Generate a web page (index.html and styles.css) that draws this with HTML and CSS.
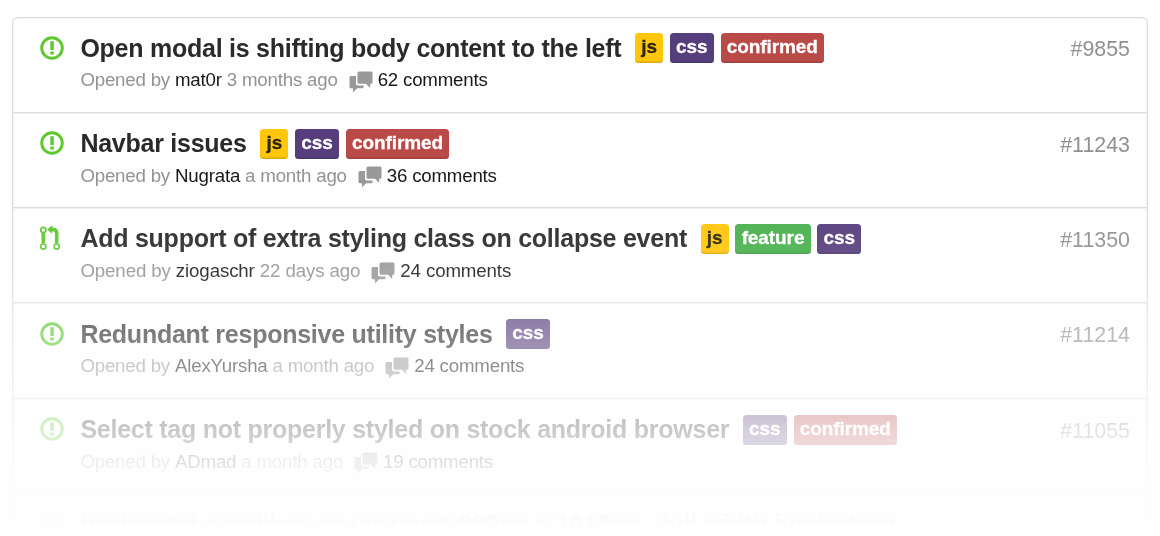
FILE: index.html
```html
<!DOCTYPE html>
<html lang="en">
<head>
<meta charset="utf-8">
<title>Issues</title>
<link rel="stylesheet" href="styles.css">
</head>
<body>
<svg class="symbols" aria-hidden="true">
  <symbol id="opened" viewBox="0 0 24 24"><circle cx="12" cy="12" r="10.3" fill="none" stroke="currentColor" stroke-width="2.9"/><path fill="currentColor" d="M10.300 5.300h3.500v8.700h-3.500zM10.300 15.600h3.500v3h-3.500z"/></symbol>
  <symbol id="pull" viewBox="0 0 24 26"><g fill="none" stroke="currentColor"><path stroke-width="3.600" d="M4.300 7.500v11M17.700 18.500V8.400q0-4-4.200-4H12"/><circle cx="4.300" cy="4.900" r="2.600" stroke-width="1.700"/><circle cx="4.300" cy="21.600" r="2.600" stroke-width="1.700"/><circle cx="17.700" cy="21.600" r="2.600" stroke-width="1.700"/></g><path fill="currentColor" d="M8.100 4.500L13.300.2v8.600z"/></symbol>
  <symbol id="comments" viewBox="0 0 24 22"><path fill="currentColor" d="M10 .5h12q1.500 0 1.500 1.500v9.200q0 1.500-1.500 1.500h-.8v4.300l-4.200-4.300H10q-1.500 0-1.500-1.500V2Q8.500.5 10 .5z"/><path fill="currentColor" d="M2 5h5v7.700q0 1.800 1.800 1.800h5.800v1.300q0 1.500-1.500 1.500H8.200l-4.300 4.200v-4.200H2q-1.500 0-1.500-1.500V6.500Q.5 5 2 5z"/></symbol>
</svg>
<main class="viewport">
<ul class="issues">
  <li class="issue">
    <svg class="state"><use href="#opened"/></svg>
    <div class="body">
      <div class="heading"><h2 class="title">Open modal is shifting body content to the left</h2><span class="label js">js</span><span class="label css">css</span><span class="label confirmed">confirmed</span></div>
      <p class="meta">Opened by <b class="user">mat0r</b> 3 months ago<svg class="bubble"><use href="#comments"/></svg><span class="user">62 comments</span></p>
    </div>
    <span class="number">#9855</span>
  </li>
  <li class="issue">
    <svg class="state"><use href="#opened"/></svg>
    <div class="body">
      <div class="heading"><h2 class="title">Navbar issues</h2><span class="label js">js</span><span class="label css">css</span><span class="label confirmed">confirmed</span></div>
      <p class="meta">Opened by <b class="user">Nugrata</b> a month ago<svg class="bubble"><use href="#comments"/></svg><span class="user">36 comments</span></p>
    </div>
    <span class="number">#11243</span>
  </li>
  <li class="issue">
    <svg class="state pull"><use href="#pull"/></svg>
    <div class="body">
      <div class="heading"><h2 class="title">Add support of extra styling class on collapse event</h2><span class="label js">js</span><span class="label feature">feature</span><span class="label css">css</span></div>
      <p class="meta wide">Opened by <b class="user">ziogaschr</b> 22 days ago<svg class="bubble"><use href="#comments"/></svg><span class="user">24 comments</span></p>
    </div>
    <span class="number">#11350</span>
  </li>
  <li class="issue">
    <svg class="state"><use href="#opened"/></svg>
    <div class="body">
      <div class="heading"><h2 class="title">Redundant responsive utility styles</h2><span class="label css">css</span></div>
      <p class="meta">Opened by <b class="user">AlexYursha</b> a month ago<svg class="bubble"><use href="#comments"/></svg><span class="user">24 comments</span></p>
    </div>
    <span class="number">#11214</span>
  </li>
  <li class="issue">
    <svg class="state"><use href="#opened"/></svg>
    <div class="body">
      <div class="heading"><h2 class="title">Select tag not properly styled on stock android browser</h2><span class="label css">css</span><span class="label confirmed">confirmed</span></div>
      <p class="meta">Opened by <b class="user">ADmad</b> a month ago<svg class="bubble"><use href="#comments"/></svg><span class="user">19 comments</span></p>
    </div>
    <span class="number">#11055</span>
  </li>
  <li class="issue">
    <svg class="state"><use href="#opened"/></svg>
    <div class="body">
      <div class="heading"><h2 class="title">horizontal scrollbar on viewport 992px &lt; 1018px - full width jumbotron</h2></div>
    </div>
  </li>
</ul>
</main>
</body>
</html>
```
FILE: styles.css
```css
* { box-sizing: border-box; }
body {
  margin: 0;
  height: 536px;
  overflow: hidden;
  background: #fefefe;
  font-family: "Liberation Sans", Arial, sans-serif;
}
.symbols { display: none; }
.viewport {
  height: 524px;
  padding: 16.5px 12px 0;
  overflow: hidden;
  -webkit-mask-image: linear-gradient(#000 180px, rgba(0,0,0,.93) 239px, rgba(0,0,0,.87) 271px, rgba(0,0,0,.61) 334px, rgba(0,0,0,.25) 429px, rgba(0,0,0,.05) 490px, rgba(0,0,0,.01) 524px);
  mask-image: linear-gradient(#000 180px, rgba(0,0,0,.93) 239px, rgba(0,0,0,.87) 271px, rgba(0,0,0,.61) 334px, rgba(0,0,0,.25) 429px, rgba(0,0,0,.05) 490px, rgba(0,0,0,.01) 524px);
}
.issues {
  margin: 0;
  padding: 0;
  list-style: none;
  border: 1px solid #dcdcdc;
  border-radius: 5px;
  box-shadow: inset 0 0 0 1px #f1f1f1;
}
.issue {
  display: flex;
  align-items: flex-start;
  height: 95.33px;
  padding: 15.3px 17px 0 26px;
  border-bottom: 1px solid #dcdcdc;
  box-shadow: 0 1px 0 #f0f0f0;
}
.state {
  flex: none;
  width: 24px;
  height: 24px;
  margin: 3.2px 16.7px 0 .7px;
  color: #5dc92f;
}
.pull { height: 26px; margin: 2px 17.4px 0 0; }
.body { flex: 1; min-width: 0; }
.heading { display: flex; align-items: center; gap: 6.8px; height: 31px; }
.title {
  margin: -1px 6.8px 0 0;
  font-size: 25px;
  line-height: 30px;
  font-weight: bold;
  letter-spacing: -.25px;
  color: #2a2a2a;
  white-space: nowrap;
}
.label {
  height: 30px;
  padding: 0 6.2px;
  border-radius: 3.5px;
  box-shadow: inset 0 -1.5px 0 rgba(0,0,0,.13);
  font-size: 19px;
  line-height: 28px;
  font-weight: bold;
  letter-spacing: -.08px;
  -webkit-text-stroke: .3px currentColor;
  color: #fff;
}
.js { background: #ffc60a; color: #2b260b; }
.css { background: #563d7c; }
.confirmed { background: #b94a48; }
.feature { background: #48b04c; }
.meta {
  display: flex;
  align-items: center;
  height: 22px;
  margin: 5.7px 0 0;
  font-size: 18.7px;
  line-height: 22px;
  letter-spacing: -.2px;
  color: #939393;
  white-space: pre;
}
.wide { letter-spacing: -.12px; }
.user { font-weight: normal; color: #181818; }
.bubble { width: 24px; height: 22px; margin: 3px 5px 0 11px; color: #999; }
.number {
  margin-top: 3.7px;
  font-size: 21.4px;
  line-height: 26px;
  color: #909090;
}
```
